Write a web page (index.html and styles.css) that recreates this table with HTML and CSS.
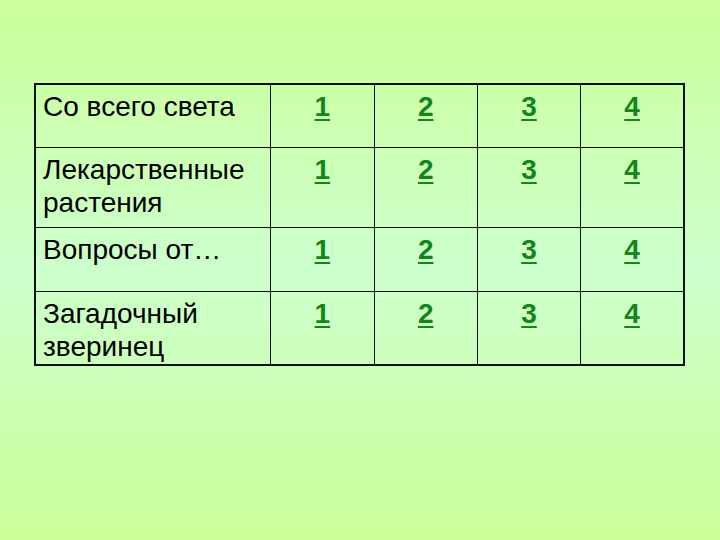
FILE: index.html
```html
<!DOCTYPE html>
<html lang="ru">
<head>
<meta charset="utf-8">
<title>Игра</title>
<link rel="stylesheet" href="styles.css">
</head>
<body>
<div class="page">
  <table class="board">
    <colgroup>
      <col class="c-topic">
      <col class="c-num">
      <col class="c-num">
      <col class="c-num">
      <col class="c-num">
    </colgroup>
    <tr class="r1">
      <td class="topic">Со всего света</td>
      <td class="num"><a>1</a></td>
      <td class="num"><a>2</a></td>
      <td class="num"><a>3</a></td>
      <td class="num"><a>4</a></td>
    </tr>
    <tr class="r2">
      <td class="topic">Лекарственные растения</td>
      <td class="num"><a>1</a></td>
      <td class="num"><a>2</a></td>
      <td class="num"><a>3</a></td>
      <td class="num"><a>4</a></td>
    </tr>
    <tr class="r3">
      <td class="topic">Вопросы от…</td>
      <td class="num"><a>1</a></td>
      <td class="num"><a>2</a></td>
      <td class="num"><a>3</a></td>
      <td class="num"><a>4</a></td>
    </tr>
    <tr class="r4">
      <td class="topic">Загадочный зверинец</td>
      <td class="num"><a>1</a></td>
      <td class="num"><a>2</a></td>
      <td class="num"><a>3</a></td>
      <td class="num"><a>4</a></td>
    </tr>
  </table>
</div>
</body>
</html>
```

FILE: styles.css
```css
html, body {
  margin: 0;
  padding: 0;
}
body {
  width: 720px;
  height: 540px;
  background: linear-gradient(to bottom, #ccff99 0%, #ccffcc 50%, #ccff99 100%);
  font-family: "Liberation Sans", Arial, sans-serif;
  overflow: hidden;
}
.page {
  padding: 83px 0 0 34px;
}
.board {
  border-collapse: collapse;
  table-layout: fixed;
  width: 651px;
  border: 2px solid #0b0f0b;
}
.c-topic { width: 235px; }
.c-num { width: 103px; }
.board td {
  border: 1px solid #0b0f0b;
  vertical-align: top;
  padding: 5px 7px 0 7px;
  font-size: 28px;
  line-height: 33px;
  color: #000;
}
.r1 td { height: 57px; }
.r2 td { height: 74px; }
.r3 td { height: 58px; }
.r4 td { height: 67px; }
.board td.num {
  text-align: center;
  padding-left: 0;
  padding-right: 0;
}
.num a {
  color: #14851a;
  font-weight: bold;
  text-decoration: underline;
  text-decoration-thickness: 2px;
  text-underline-offset: 3px;
}
```
